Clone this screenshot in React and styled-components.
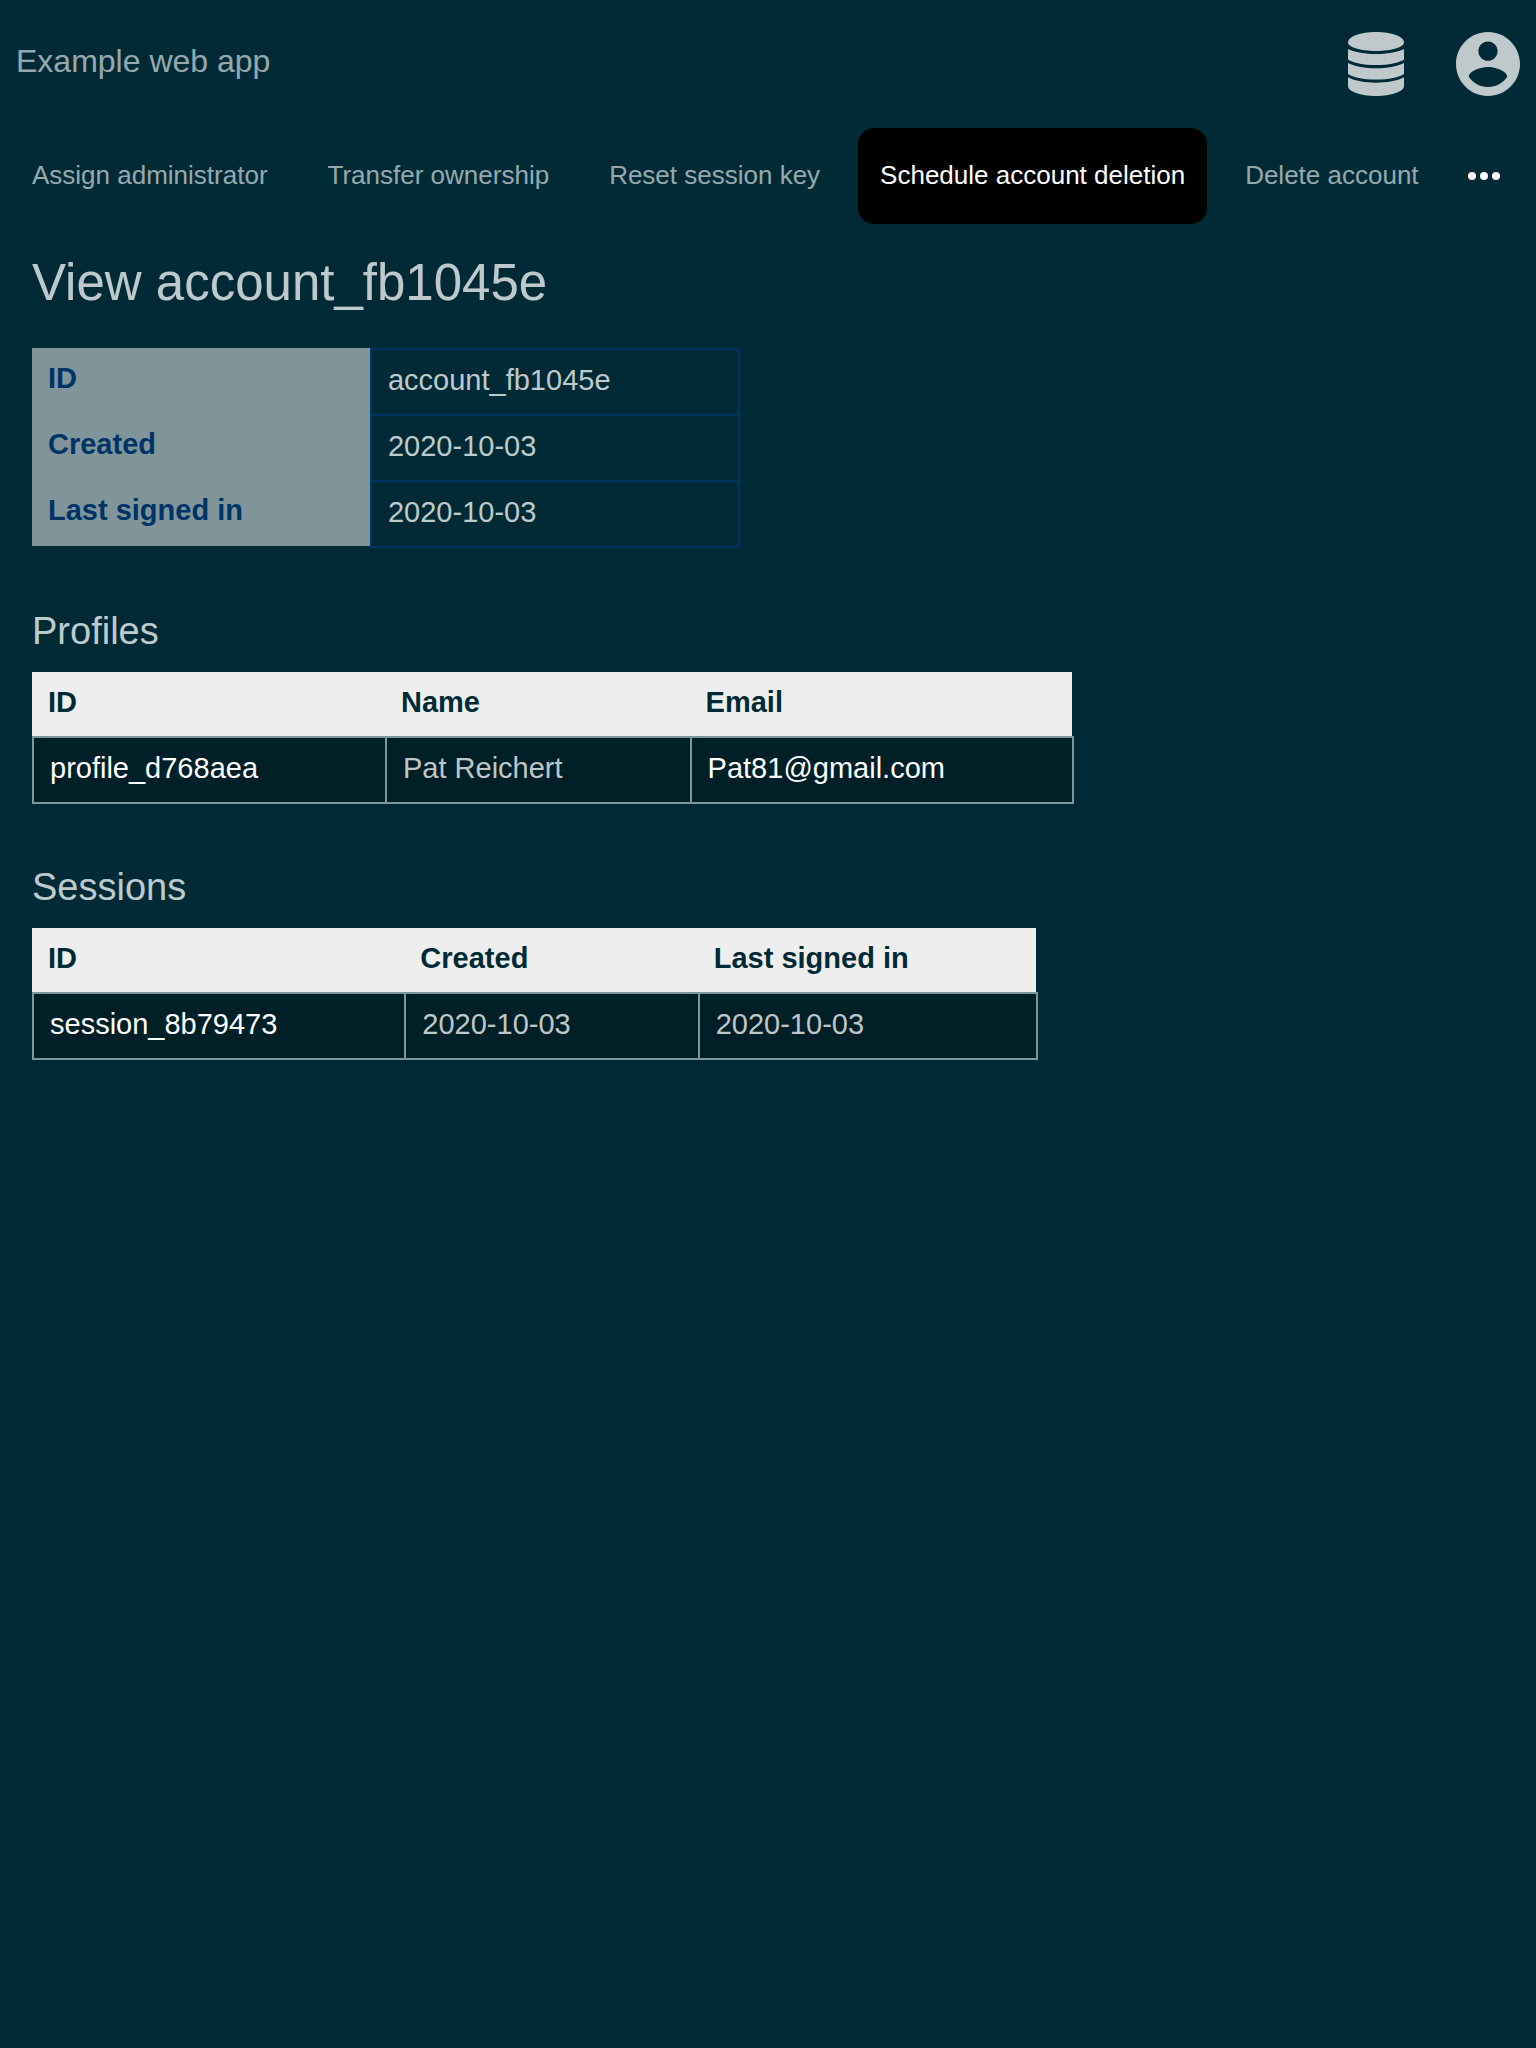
import React from "react";
import styled, { createGlobalStyle } from "styled-components";

const GlobalStyle = createGlobalStyle`
  * { box-sizing: border-box; }
  body {
    margin: 0;
    background: #002b36;
    color: rgba(255, 255, 255, 0.75);
    font-family: "Liberation Sans", Arial, sans-serif;
    font-size: 29px;
    line-height: 32px;
  }
`;

const Header = styled.header`
  display: flex;
  align-items: center;
  justify-content: space-between;
  padding: 32px 16px;
`;

const Brand = styled.a`
  color: rgba(255, 255, 255, 0.6);
  font-size: 32px;
  line-height: 36px;
  padding-bottom: 6px;
  text-decoration: none;
`;

const HeaderActions = styled.div`
  display: flex;
  align-items: center;
  gap: 52px;
`;

const IconButton = styled.button`
  display: flex;
  padding: 0;
  border: 0;
  background: none;
  color: ${({ $bright }) => ($bright ? "#fff" : "rgba(255, 255, 255, 0.75)")};
  cursor: pointer;
`;

const Nav = styled.nav`
  display: flex;
  align-items: center;
  gap: 16px;
  padding: 0 36px 0 10px;
`;

const NavLink = styled.a`
  padding: 31px 22px 33px;
  border-radius: 16px;
  background: ${({ $active }) => ($active ? "#000" : "transparent")};
  color: ${({ $active }) => ($active ? "#fff" : "rgba(255, 255, 255, 0.6)")};
  font-size: 26px;
  text-decoration: none;
  white-space: nowrap;
`;

const MoreSlot = styled.div`
  margin-left: auto;
`;

const Main = styled.main`
  padding: 28px 32px 64px;
`;

const PageTitle = styled.h1`
  margin: 0 0 34px;
  font-size: 51px;
  line-height: 62px;
  font-weight: 400;
`;

const Section = styled.section`
  margin-top: 61px;
`;

const SectionTitle = styled.h2`
  margin: 0 0 19px;
  font-size: 38px;
  line-height: 44px;
  font-weight: 400;
`;

const Table = styled.table`
  border-collapse: separate;
  border-spacing: 0;
  text-align: left;

  th,
  td {
    padding: 14px 127px 18px 16px;
    vertical-align: top;
    white-space: nowrap;
  }

  th {
    background-clip: padding-box;
  }

  td {
    border-style: solid;
    border-width: 2px 0 0 2px;
  }

  td:last-child {
    border-right-width: 2px;
  }

  tbody tr:last-child td {
    border-bottom-width: 2px;
  }
`;

const DetailTable = styled(Table)`
  th {
    background-color: #80959a;
    color: #003366;
  }

  tr:last-child th {
    border-bottom: 2px solid transparent;
  }

  td {
    border-color: #003366;
  }
`;

const DataTable = styled(Table)`
  th {
    background-color: #eee;
    color: #002b36;
  }

  th:last-child {
    border-right: 2px solid transparent;
  }

  td {
    border-color: #809599;
    background: #002028;
  }
`;

const CellLink = styled.a`
  color: #fff;
  text-decoration: none;
`;

const DatabaseIcon = () => (
  <svg width="56" height="64" viewBox="0 0 56 64" fill="currentColor" aria-hidden="true">
    <path d="M28 0C43.500 0 56 4.500 56 10.500C56 15 43.500 19 28 19C12.500 19 0 15 0 10.500C0 4.500 12.500 0 28 0Z" />
    <path d="M0 17C7 20.500 17 22 28 22C39 22 49 20.500 56 17V27.500C51 31 41 33 28 33C15 33 5 31 0 27.500Z" />
    <path d="M0 31C7 34.500 17 36.300 28 36.300C39 36.300 49 34.500 56 31V42C51 45.500 41 47.500 28 47.500C15 47.500 5 45.500 0 42Z" />
    <path d="M0 45.300C7 49 17 50.700 28 50.700C39 50.700 49 49 56 45.300V54C56 59.500 43.500 64 28 64C12.500 64 0 59.500 0 54Z" />
  </svg>
);

const AccountIcon = () => (
  <svg width="64" height="64" viewBox="2 2 20 20" fill="currentColor" aria-hidden="true">
    <path d="M12 2C6.480 2 2 6.480 2 12s4.480 10 10 10 10-4.480 10-10S17.520 2 12 2zm0 3c1.660 0 3 1.340 3 3s-1.340 3-3 3-3-1.340-3-3 1.340-3 3-3zm0 14.200c-2.500 0-4.710-1.280-6-3.220.030-1.990 4-3.080 6-3.080 1.990 0 5.970 1.090 6 3.080-1.290 1.940-3.500 3.220-6 3.220z" />
  </svg>
);

const MoreIcon = () => (
  <svg width="32" height="8" viewBox="0 0 32 8" fill="currentColor" aria-hidden="true">
    <circle cx="4" cy="4" r="4" />
    <circle cx="16" cy="4" r="4" />
    <circle cx="28" cy="4" r="4" />
  </svg>
);

const navItems = [
  "Assign administrator",
  "Transfer ownership",
  "Reset session key",
  "Schedule account deletion",
  "Delete account",
];

const details = [
  ["ID", "account_fb1045e"],
  ["Created", "2020-10-03"],
  ["Last signed in", "2020-10-03"],
];

const tables = [
  {
    title: "Profiles",
    columns: ["ID", "Name", "Email"],
    linked: [0, 2],
    rows: [["profile_d768aea", "Pat Reichert", "Pat81@gmail.com"]],
  },
  {
    title: "Sessions",
    columns: ["ID", "Created", "Last signed in"],
    linked: [0],
    rows: [["session_8b79473", "2020-10-03", "2020-10-03"]],
  },
];

export default function App() {
  return (
    <>
      <GlobalStyle />
      <Header>
        <Brand href="#home">Example web app</Brand>
        <HeaderActions>
          <IconButton type="button" aria-label="Administration">
            <DatabaseIcon />
          </IconButton>
          <IconButton type="button" aria-label="Account">
            <AccountIcon />
          </IconButton>
        </HeaderActions>
      </Header>
      <Nav>
        {navItems.map((label) => {
          const active = label === "Schedule account deletion";
          return (
            <NavLink key={label} href="#" $active={active} aria-current={active ? "page" : undefined}>
              {label}
            </NavLink>
          );
        })}
        <MoreSlot>
          <IconButton type="button" $bright aria-label="More">
            <MoreIcon />
          </IconButton>
        </MoreSlot>
      </Nav>
      <Main>
        <PageTitle>View account_fb1045e</PageTitle>
        <DetailTable>
          <tbody>
            {details.map(([label, value]) => (
              <tr key={label}>
                <th scope="row">{label}</th>
                <td>{value}</td>
              </tr>
            ))}
          </tbody>
        </DetailTable>
        {tables.map(({ title, columns, linked, rows }) => (
          <Section key={title}>
            <SectionTitle>{title}</SectionTitle>
            <DataTable aria-label={title}>
              <thead>
                <tr>
                  {columns.map((column) => (
                    <th key={column} scope="col">{column}</th>
                  ))}
                </tr>
              </thead>
              <tbody>
                {rows.map((row) => (
                  <tr key={row[0]}>
                    {row.map((cell, i) => (
                      <td key={columns[i]}>
                        {linked.includes(i) ? <CellLink href="#">{cell}</CellLink> : cell}
                      </td>
                    ))}
                  </tr>
                ))}
              </tbody>
            </DataTable>
          </Section>
        ))}
      </Main>
    </>
  );
}
